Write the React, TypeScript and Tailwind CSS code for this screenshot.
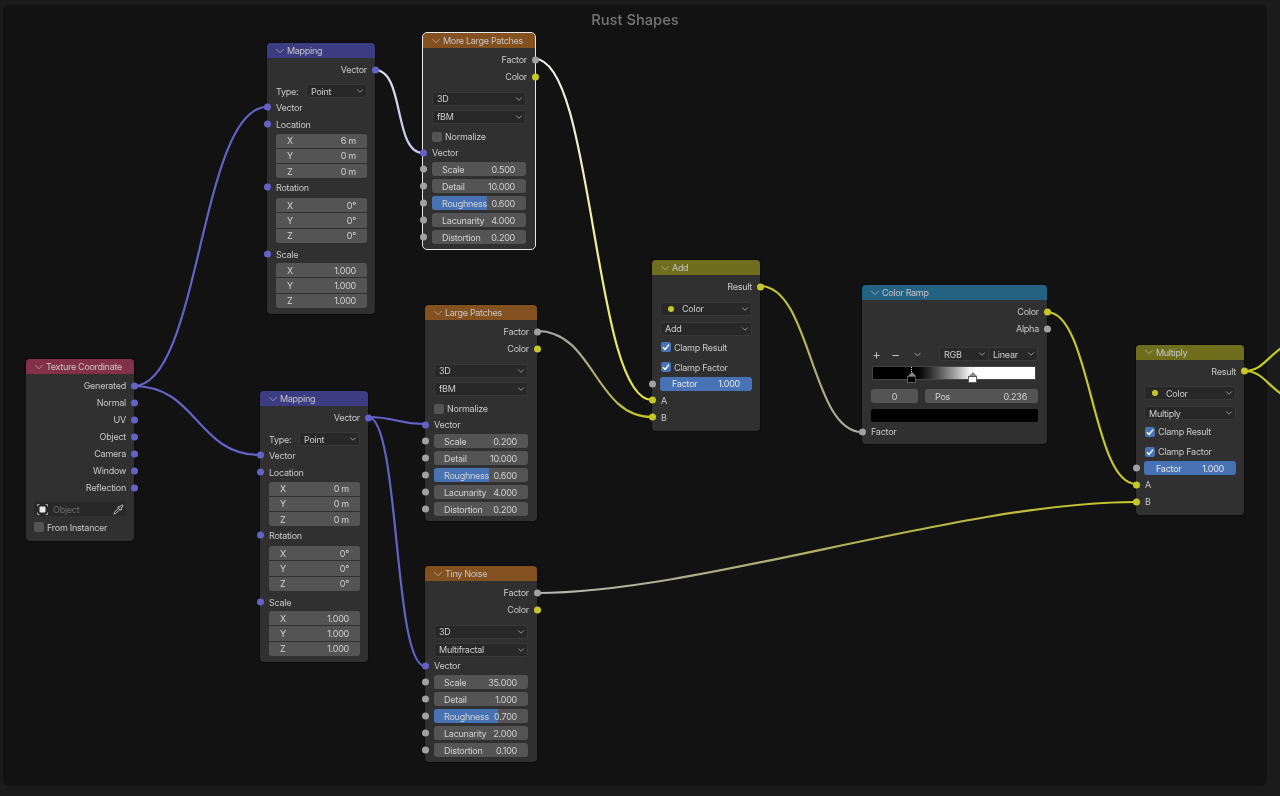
import React from "react";
import {ChevronDown, Pipette} from "lucide-react";

type SocketColor = "vec" | "col" | "val";

const socketClasses: Record<SocketColor, string> = {
    vec: "bg-[#6363c7]",
    col: "bg-[#c7c729]",
    val: "bg-[#a1a1a1]",
};

const Socket: React.FC<{ color: SocketColor, side: "in" | "out" }> = ({color, side}) => (
    <span
        className={"absolute top-1/2 -translate-y-1/2 size-[7px] rounded-full " + socketClasses[color] + (side === "in" ? " -left-[3.5px]" : " -right-[3.5px]")}></span>
);

interface NodeProps {
    title: string,
    pos: string,
    header: string,
    selected?: boolean,
    children: React.ReactNode
}

const Node: React.FC<NodeProps> = ({title, pos, header, selected, children}) => (
    <div
        className={"absolute rounded-[4px] bg-[#303030] text-[#c9c9c9] text-[9px] tracking-[-0.25px] leading-none shadow-[0_0_2px_#000] " + pos + (selected ? " outline outline-[1.5px] outline-[#e8e8e8]" : "")}>
        <div className={"flex items-center h-[15px] rounded-t-[4px] pl-[6px] text-[#c6c6c6] tracking-[-0.3px] " + header}>
            <ChevronDown size={14} strokeWidth={1} className="text-[#d0d0d0]"/>
            <span>{title}</span>
        </div>
        {children}
    </div>
);

const OutRow: React.FC<{ label: string, color: SocketColor, className?: string }> = ({label, color, className}) => (
    <div className={"relative flex items-center justify-end h-[17px] pr-[8px] " + (className || "")}>
        <span>{label}</span>
        <Socket color={color} side="out"/>
    </div>
);

const InRow: React.FC<{ label: string, color: SocketColor, className?: string }> = ({label, color, className}) => (
    <div className={"relative flex items-center h-[17px] pl-[9px] " + (className || "")}>
        <span>{label}</span>
        <Socket color={color} side="in"/>
    </div>
);

const Dropdown: React.FC<{ label: string, dot?: boolean, className?: string }> = ({label, dot, className}) => (
    <div
        className={"flex items-center justify-between h-[14px] rounded-[3px] bg-[#282828] border border-[#383838] pl-[4px] pr-[1px] text-[#cfcfcf] " + (className || "")}>
        <span className="flex items-center">
            {dot && <span className="size-[6px] rounded-full bg-[#c7c729] ml-[3px] mr-[8px]"></span>}
            {label}
        </span>
        <ChevronDown size={10} strokeWidth={1.5}/>
    </div>
);

const Value: React.FC<{ label: string, value: string, fill?: number, className?: string }> = ({label, value, fill, className}) => (
    <div
        className={"relative flex items-center justify-between h-[14px] rounded-[3px] bg-[#545454] pl-[10px] pr-[11px] overflow-hidden text-[#d2d2d2] " + (className || "")}>
        {fill !== undefined &&
            <span className="absolute left-0 top-0 bottom-0 bg-[#4772b3]" style={{width: fill + "%"}}></span>}
        <span className="relative">{label}</span>
        <span className="relative">{value}</span>
    </div>
);

const Check: React.FC<{ label: string, checked?: boolean, className?: string }> = ({label, checked, className}) => (
    <div className={"flex items-center gap-[3px] h-[14px] " + (className || "")}>
        <span
            className={"flex items-center justify-center size-[10px] rounded-[2px] " + (checked ? "bg-[#4772b3]" : "bg-[#545454]")}>
            {checked &&
                <svg width="8" height="8" viewBox="0 0 8 8" fill="none">
                    <path d="M1 4.2 L3.1 6.4 L7 1.6" stroke="#fff" strokeWidth="1.5"/>
                </svg>}
        </span>
        <span>{label}</span>
    </div>
);

const XYZ: React.FC<{ values: string[], className?: string }> = ({values, className}) => (
    <div className={"flex flex-col gap-px pl-[9px] pr-[8px] " + (className || "")}>
        {["X", "Y", "Z"].map((axis, i) => (
            <div key={axis}
                 className={"flex items-center justify-between h-[14.33px] bg-[#545454] pl-[11px] pr-[11px] text-[#d2d2d2] " + (i === 0 ? "rounded-t-[3px]" : i === 2 ? "rounded-b-[3px]" : "")}>
                <span>{axis}</span>
                <span>{values[i]}</span>
            </div>
        ))}
    </div>
);

const Mapping: React.FC<{ pos: string, location: string[] }> = ({pos, location}) => (
    <Node title="Mapping" pos={pos} header="bg-[#3c3c83]">
        <OutRow label="Vector" color="vec" className="mt-[3px]"/>
        <div className="flex items-center pl-[9px] pr-[8px] mt-[6px]">
            <span className="w-[30px]">Type:</span>
            <Dropdown label="Point" className="flex-1"/>
        </div>
        <InRow label="Vector" color="vec" className="mt-[0.5px]"/>
        <InRow label="Location" color="vec"/>
        <XYZ values={location} className="mt-px"/>
        <InRow label="Rotation" color="vec" className="mt-[0.5px]"/>
        <XYZ values={["0°", "0°", "0°"]} className="mt-[2px]"/>
        <InRow label="Scale" color="vec" className="mt-[3px]"/>
        <XYZ values={["1.000", "1.000", "1.000"]}/>
        <div className="h-[6px]"></div>
    </Node>
);

interface NoiseProps {
    title: string,
    pos: string,
    kind: string,
    normalize?: boolean,
    selected?: boolean,
    values: [string, string, number?][]
}

const Noise: React.FC<NoiseProps> = ({title, pos, kind, normalize, selected, values}) => (
    <Node title={title} pos={pos} header="bg-[#83501f]" selected={selected}>
        <OutRow label="Factor" color="val" className="mt-[3px]"/>
        <OutRow label="Color" color="col"/>
        <div className="px-[9px] mt-[6.5px]"><Dropdown label="3D"/></div>
        <div className="px-[9px] mt-[4px]"><Dropdown label={kind}/></div>
        {normalize && <div className="px-[9px] mt-[6px]"><Check label="Normalize"/></div>}
        <InRow label="Vector" color="vec" className="mt-[0.5px]"/>
        <div className="flex flex-col gap-[3px] mt-px">
            {values.map(([label, value, fill]) => (
                <div key={label} className="relative px-[9px]">
                    <Value label={label} value={value} fill={fill}/>
                    <Socket color="val" side="in"/>
                </div>
            ))}
        </div>
        <div className="h-[5px]"></div>
    </Node>
);

const Mix: React.FC<{ title: string, pos: string }> = ({title, pos}) => (
    <Node title={title} pos={pos} header="bg-[#6e6e1d]">
        <OutRow label="Result" color="col" className="mt-[3px]"/>
        <div className="px-[8px] mt-[6.5px]"><Dropdown label="Color" dot/></div>
        <div className="px-[8px] mt-[6px]"><Dropdown label={title}/></div>
        <div className="px-[9px] mt-[4.5px]"><Check label="Clamp Result" checked/></div>
        <div className="px-[9px] mt-[6px]"><Check label="Clamp Factor" checked/></div>
        <div className="relative px-[8px] mt-[2.5px]">
            <div
                className="flex items-center justify-between h-[14px] rounded-[3px] bg-[#4772b3] pl-[12px] pr-[12px] text-[#e4e4e4]">
                <span>Factor</span>
                <span>1.000</span>
            </div>
            <Socket color="val" side="in"/>
        </div>
        <InRow label="A" color="col" className="mt-px"/>
        <InRow label="B" color="col"/>
        <div className="h-[5px]"></div>
    </Node>
);

const RampHandle: React.FC<{ pos: string, fill: string }> = ({pos, fill}) => (
    <div className={"absolute top-0 flex flex-col items-center w-[9px] " + pos}>
        <span className="h-[5px] border-l border-dotted border-[#dcdcdc]"></span>
        <span className="border-x-[4px] border-x-transparent border-b-[4px] border-b-[#8a8a8a]"></span>
        <span className={"w-[9px] h-[7px] border border-[#5a5a5a] " + fill}></span>
    </div>
);

const ColorRamp: React.FC = () => (
    <Node title="Color Ramp" pos="left-[862px] top-[285px] w-[185px]" header="bg-[#246283]">
        <OutRow label="Color" color="col" className="mt-[3px]"/>
        <OutRow label="Alpha" color="val"/>
        <div className="flex items-center pl-[10px] pr-[9px] mt-[10px] text-[#d8d8d8]">
            <span className="w-[19px] text-[14px] font-light">+</span>
            <span className="w-[19px] text-[14px] font-light">−</span>
            <ChevronDown size={11} strokeWidth={1.5} className="ml-[2px]"/>
            <div className="flex flex-1 ml-[16px]">
                <Dropdown label="RGB" className="w-[50px] rounded-r-none"/>
                <Dropdown label="Linear" className="flex-1 rounded-l-none border-l-0"/>
            </div>
        </div>
        <div className="pl-[10px] pr-[11px] mt-[5px]">
            <div
                className="relative h-[14px] border border-[#444] bg-gradient-to-r from-black from-[24%] to-white to-[61%]">
                <RampHandle pos="left-[34px]" fill="bg-black"/>
                <RampHandle pos="left-[95px]" fill="bg-white"/>
            </div>
        </div>
        <div className="flex gap-[7px] px-[9px] mt-[9px]">
            <div
                className="flex items-center justify-center w-[47px] h-[14px] rounded-[3px] bg-[#545454] text-[#d2d2d2]">0
            </div>
            <Value label="Pos" value="0.236" className="flex-1"/>
        </div>
        <div className="px-[9px] mt-[6px]">
            <div className="h-[13px] rounded-[2px] bg-black"></div>
        </div>
        <InRow label="Factor" color="val" className="mt-px"/>
        <div className="h-[4px]"></div>
    </Node>
);

const TextureCoordinate: React.FC = () => (
    <Node title="Texture Coordinate" pos="left-[26px] top-[359px] w-[108px]" header="bg-[#83314a]">
        <div className="mt-[3px]">
            {["Generated", "Normal", "UV", "Object", "Camera", "Window", "Reflection"].map(label => (
                <OutRow key={label} label={label} color="vec"/>
            ))}
        </div>
        <div className="px-[8px] mt-[6px]">
            <div
                className="flex items-center justify-between h-[14px] rounded-[3px] bg-[#282828] pl-[3px] pr-[2px] text-[#6a6a6a]">
                <span className="flex items-center gap-[5px]">
                    <svg width="11" height="11" viewBox="0 0 11 11" fill="none">
                        <path d="M0.5 2.5 V0.5 H2.5 M8.5 0.5 H10.5 V2.5 M0.5 8.5 V10.5 H2.5 M8.5 10.5 H10.5 V8.5"
                              stroke="#a8a8a8" strokeWidth="1"/>
                        <rect x="2.5" y="2.5" width="6" height="6" rx="1" fill="#e8e8e8"/>
                    </svg>
                    Object
                </span>
                <Pipette size={11} className="text-[#d8d8d8]"/>
            </div>
        </div>
        <div className="px-[8px] mt-[4px]"><Check label="From Instancer"/></div>
        <div className="h-[7px]"></div>
    </Node>
);

const Wire: React.FC<{ d: string, stroke: string }> = ({d, stroke}) => (
    <path d={d} stroke={stroke} strokeWidth="2.2" fill="none" strokeLinecap="round"/>
);

const Wires: React.FC = () => (
    <svg className="absolute inset-0" width="1280" height="796" viewBox="0 0 1280 796">
        <defs>
            <linearGradient id="whiteYellow" gradientUnits="userSpaceOnUse" x1="535" y1="59" x2="652" y2="400">
                <stop offset="0" stopColor="#f2f2f2"/>
                <stop offset="0.5" stopColor="#f0f0a8"/>
                <stop offset="1" stopColor="#e6e640"/>
            </linearGradient>
            <linearGradient id="grayYellow" gradientUnits="userSpaceOnUse" x1="537" y1="331" x2="652" y2="417">
                <stop offset="0" stopColor="#a8a8a8"/>
                <stop offset="0.45" stopColor="#a8a880"/>
                <stop offset="1" stopColor="#c7c729"/>
            </linearGradient>
            <linearGradient id="yellowGray" gradientUnits="userSpaceOnUse" x1="760" y1="286" x2="862" y2="432">
                <stop offset="0" stopColor="#c7c729"/>
                <stop offset="0.55" stopColor="#b0b070"/>
                <stop offset="1" stopColor="#a8a8a8"/>
            </linearGradient>
            <linearGradient id="grayYellowLong" gradientUnits="userSpaceOnUse" x1="537" y1="593" x2="1136" y2="502">
                <stop offset="0" stopColor="#b8b8b8"/>
                <stop offset="0.25" stopColor="#acac8c"/>
                <stop offset="0.6" stopColor="#b4b44c"/>
                <stop offset="1" stopColor="#c7c729"/>
            </linearGradient>
            <linearGradient id="lavender" gradientUnits="userSpaceOnUse" x1="375" y1="70" x2="423" y2="153">
                <stop offset="0" stopColor="#e0e0f4"/>
                <stop offset="1" stopColor="#c4c4ee"/>
            </linearGradient>
        </defs>
        <Wire d="M134 386 C 200 386, 200 107, 267 107" stroke="#6363c7"/>
        <Wire d="M134 386 C 197 386, 197 455, 260 455" stroke="#6363c7"/>
        <Wire d="M375 70 C 405 70, 393 153, 423 153" stroke="url(#lavender)"/>
        <Wire d="M368 417 C 396 417, 397 424, 425 424" stroke="#6363c7"/>
        <Wire d="M368 417 C 400 417, 393 666, 425 666" stroke="#6363c7"/>
        <Wire d="M535 59 C 594 59, 593 400, 652 400" stroke="url(#whiteYellow)"/>
        <Wire d="M537 331 C 594 331, 595 417, 652 417" stroke="url(#grayYellow)"/>
        <Wire d="M760 286 C 811 286, 811 432, 862 432" stroke="url(#yellowGray)"/>
        <Wire d="M1047 312 C 1091 312, 1092 484, 1136 484" stroke="#c7c729"/>
        <Wire d="M537 593 C 700 593, 960 502, 1136 502" stroke="url(#grayYellowLong)"/>
        <Wire d="M1244 371 C 1262 371, 1266 358, 1284 346" stroke="#c7c729"/>
        <Wire d="M1244 371 C 1262 371, 1266 384, 1284 396" stroke="#c7c729"/>
    </svg>
);

const App: React.FC = () => {
    return (
        <div className="relative w-[1280px] h-[796px] overflow-hidden bg-[#1b1b1b] pt-[5px] pl-[3px] blur-[0.45px] font-['Inter',sans-serif]">
            <div className="w-[1264px] h-[781px] rounded-[6px] bg-[#121212] pt-[6.5px] text-center text-[14.7px] leading-[17px] font-medium text-[#757575]">
                Rust Shapes
            </div>
            <Wires/>
            <TextureCoordinate/>
            <Mapping pos="left-[267px] top-[43px] w-[108px]" location={["6 m", "0 m", "0 m"]}/>
            <Mapping pos="left-[260px] top-[391px] w-[108px]" location={["0 m", "0 m", "0 m"]}/>
            <Noise title="More Large Patches" pos="left-[423px] top-[33px] w-[112px]" kind="fBM" normalize selected
                   values={[["Scale", "0.500"], ["Detail", "10.000"], ["Roughness", "0.600", 58], ["Lacunarity", "4.000"], ["Distortion", "0.200"]]}/>
            <Noise title="Large Patches" pos="left-[425px] top-[305px] w-[112px]" kind="fBM" normalize
                   values={[["Scale", "0.200"], ["Detail", "10.000"], ["Roughness", "0.600", 58], ["Lacunarity", "4.000"], ["Distortion", "0.200"]]}/>
            <Noise title="Tiny Noise" pos="left-[425px] top-[566px] w-[112px]" kind="Multifractal"
                   values={[["Scale", "35.000"], ["Detail", "1.000"], ["Roughness", "0.700", 68], ["Lacunarity", "2.000"], ["Distortion", "0.100"]]}/>
            <Mix title="Add" pos="left-[652px] top-[260px] w-[108px]"/>
            <ColorRamp/>
            <Mix title="Multiply" pos="left-[1136px] top-[344.5px] w-[108px]"/>
        </div>
    );
}
export default App;
